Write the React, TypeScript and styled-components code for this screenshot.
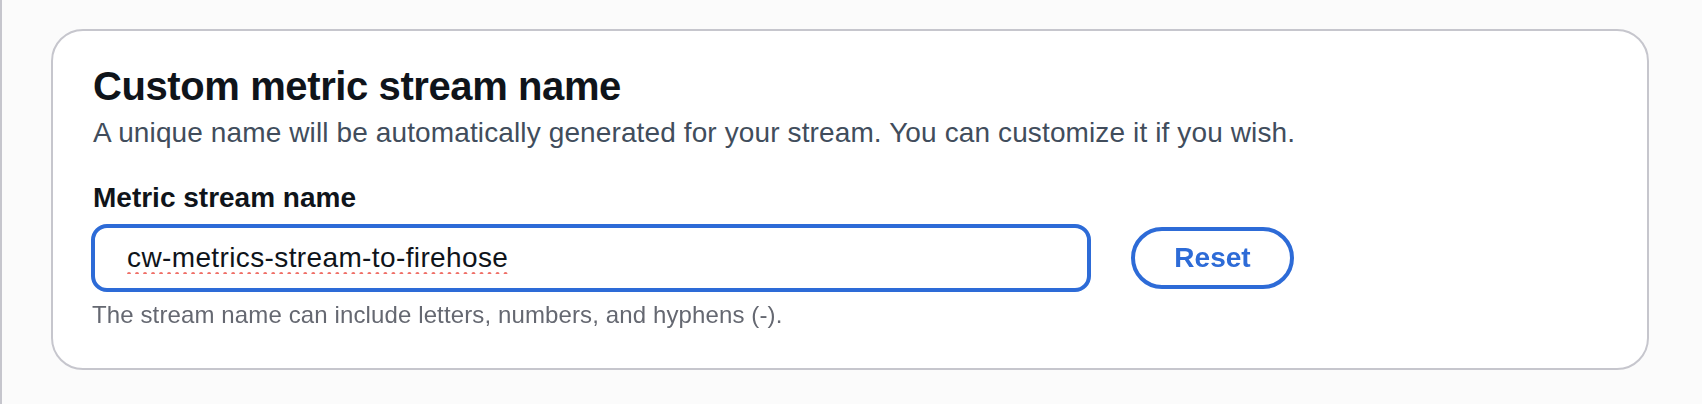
import { useState } from "react";
import styled, { createGlobalStyle } from "styled-components";

const GlobalStyle = createGlobalStyle`
  html, body {
    margin: 0;
    padding: 0;
    background: #fbfbfb;
    font-family: "Liberation Sans", Arial, Helvetica, sans-serif;
  }
`;

const Page = styled.div`
  min-height: 404px;
  box-sizing: border-box;
  border-left: 2px solid #c6c6cd;
  padding: 29px 53px 0 49px;
`;

const Card = styled.section`
  box-sizing: border-box;
  height: 341px;
  background: #ffffff;
  border: 2px solid #c6c6cd;
  border-radius: 32px;
  padding: 31px 38px 0 38px;
`;

const Title = styled.h2`
  margin: 0;
  font-size: 40px;
  line-height: 48px;
  font-weight: 700;
  letter-spacing: -0.4px;
  color: #0f141a;
  padding-left: 2px;
`;

const Description = styled.p`
  margin: 3px 0 0;
  font-size: 28px;
  line-height: 40px;
  letter-spacing: 0.12px;
  color: #414d5c;
  padding-left: 2px;
`;

const Label = styled.label`
  display: block;
  margin-top: 25px;
  font-size: 28px;
  line-height: 40px;
  font-weight: 700;
  color: #0f141a;
  padding-left: 2px;
`;

const FieldRow = styled.div`
  display: flex;
  align-items: center;
  gap: 40px;
  margin-top: 6px;
`;

const TextInput = styled.input`
  box-sizing: border-box;
  width: 1000px;
  height: 68px;
  border: 4px solid #2d6bd7;
  border-radius: 16px;
  padding: 0 32px;
  font-family: inherit;
  font-size: 28px;
  letter-spacing: 0.38px;
  color: #0f141a;
  background: #ffffff;
  outline: none;
  caret-color: #000;
  text-decoration: underline dotted #ef6f67;
  text-decoration-thickness: 4px;
  text-underline-offset: 5px;
`;

const ResetButton = styled.button`
  box-sizing: border-box;
  width: 163px;
  height: 62px;
  border: 4px solid #2d6bd7;
  border-radius: 31px;
  background: #ffffff;
  color: #2d6bd7;
  font-family: inherit;
  font-size: 28px;
  font-weight: 700;
  cursor: pointer;
`;

const Hint = styled.p`
  margin: 7px 0 0;
  font-size: 24px;
  line-height: 32px;
  letter-spacing: 0.12px;
  color: #656871;
  padding-left: 1px;
`;

const DEFAULT_NAME = "cw-metrics-stream-to-firehose";

export default function App() {
  const [name, setName] = useState(DEFAULT_NAME);

  return (
    <>
      <GlobalStyle />
      <Page>
        <Card>
          <Title>Custom metric stream name</Title>
          <Description>
            A unique name will be automatically generated for your stream. You
            can customize it if you wish.
          </Description>
          <Label htmlFor="stream-name">Metric stream name</Label>
          <FieldRow>
            <TextInput
              id="stream-name"
              value={name}
              spellCheck={false}
              autoFocus
              onChange={(e) => setName(e.target.value)}
            />
            <ResetButton onClick={() => setName(DEFAULT_NAME)}>Reset</ResetButton>
          </FieldRow>
          <Hint>
            The stream name can include letters, numbers, and hyphens (-).
          </Hint>
        </Card>
      </Page>
    </>
  );
}
